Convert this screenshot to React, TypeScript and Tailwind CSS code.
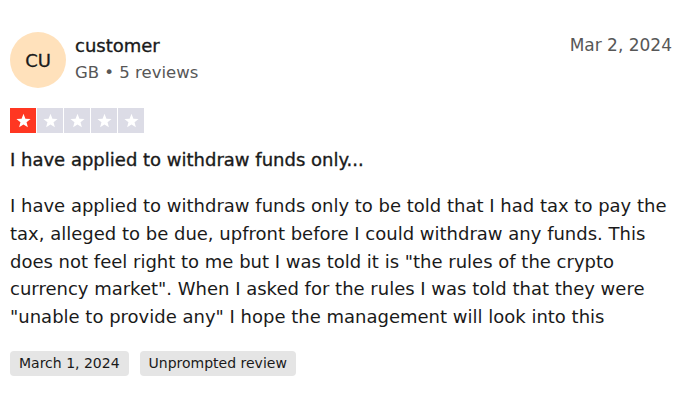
import React from "react";

function Star({ filled }: { filled: boolean }) {
  return (
    <div className={`flex h-[25px] w-[26px] items-center justify-center ${filled ? "bg-[#ff3722]" : "bg-[#dcdce6]"}`}>
      <svg width="17" height="17" viewBox="0 0 24 24">
        <path d="M12 2.5l2.7 6.9 7.3.4-5.7 4.6 1.9 7.1L12 17.5l-6.2 4 1.9-7.1L2 9.8l7.3-.4z" fill="#ffffff" />
      </svg>
    </div>
  );
}

export default function App() {
  return (
    <div className="w-[696px] h-[405px] bg-white text-[#1a1a1a]" style={{ fontFamily: "'DejaVu Sans', sans-serif" }}>
      <div className="px-[10px] pt-[32px]">
        <div className="flex items-start">
          <div className="flex h-[56px] w-[56px] shrink-0 items-center justify-center rounded-full bg-[#ffe1bb] text-[18px] text-[#1a1a1a] [-webkit-text-stroke:0.3px]">
            CU
          </div>
          <div className="ml-[9px] flex flex-col pt-[1px]">
            <div className="text-[18px] leading-[26px] [-webkit-text-stroke:0.35px]">customer</div>
            <div className="mt-[2px] text-[16.5px] leading-[24px] text-[#575757]">GB • 5 reviews</div>
          </div>
          <div className="ml-auto mr-[14px] pt-[2px] text-[17px] leading-[22px] text-[#575757]">Mar 2, 2024</div>
        </div>
        <div className="mt-[20px] flex gap-[1px]">
          <Star filled />
          <Star filled={false} />
          <Star filled={false} />
          <Star filled={false} />
          <Star filled={false} />
        </div>
        <div className="mt-[14px] text-[18px] leading-[26px] [-webkit-text-stroke:0.35px]">I have applied to withdraw funds only...</div>
        <p className="mt-[19px] w-[672px] text-[18px] leading-[27.75px]">
          I have applied to withdraw funds only to be told that I had tax to pay the tax, alleged to be due, upfront before I could withdraw any funds. This does not feel right to me but I was told it is "the rules of the crypto currency market". When I asked for the rules I was told that they were "unable to provide any" I hope the management will look into this
        </p>
        <div className="mt-[20px] flex gap-[11px]">
          <span className="rounded-[4px] bg-[#e5e5e5] px-[9px] py-[2px] text-[14px] leading-[21px]">March 1, 2024</span>
          <span className="rounded-[4px] bg-[#e5e5e5] px-[9px] py-[2px] text-[14px] leading-[21px]">Unprompted review</span>
        </div>
      </div>
    </div>
  );
}
